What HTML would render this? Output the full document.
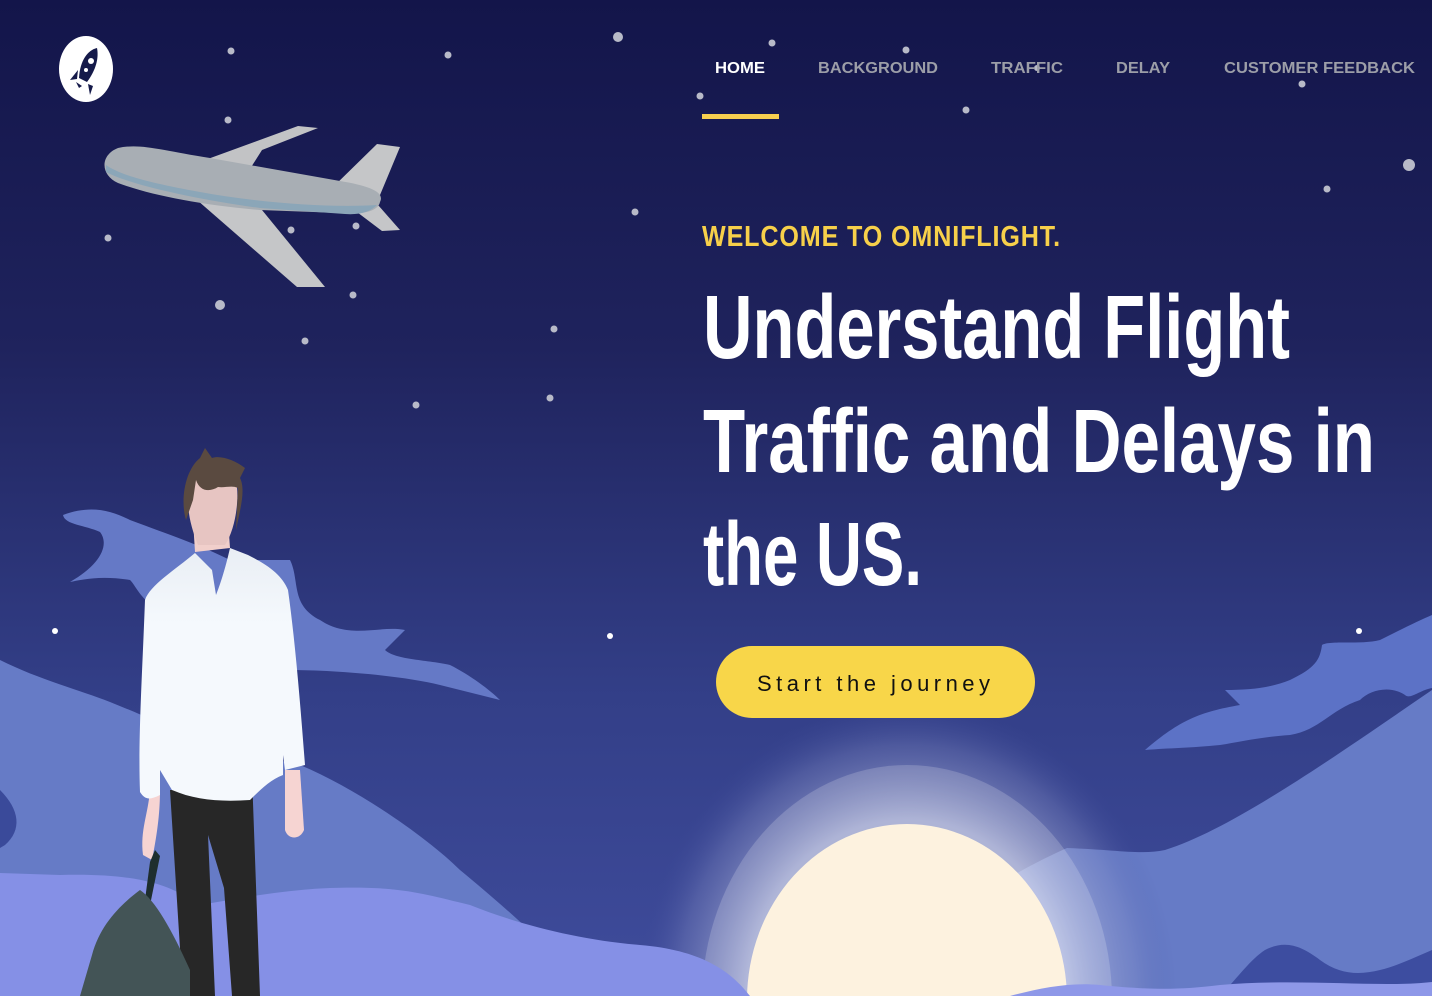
<!DOCTYPE html>
<html><head><meta charset="utf-8"><style>
html,body{margin:0;padding:0;width:1432px;height:996px;overflow:hidden;background:#1c2056}
svg{display:block;position:absolute;left:0;top:0}
text{font-family:"Liberation Sans",sans-serif}
.b{font-weight:700}
</style></head><body>
<svg width="1432" height="996" viewBox="0 0 1432 996" xmlns="http://www.w3.org/2000/svg">
<defs>
<linearGradient id="sky" x1="0" y1="0" x2="0" y2="1">
<stop offset="0" stop-color="#13154a"/>
<stop offset="0.35" stop-color="#1f235d"/>
<stop offset="0.7" stop-color="#333f88"/>
<stop offset="1" stop-color="#3f4c9c"/>
</linearGradient>
<radialGradient id="halo" cx="0.5" cy="0.5" r="0.5">
<stop offset="0.6" stop-color="#c8cde8" stop-opacity="0.7"/>
<stop offset="0.85" stop-color="#8a93c8" stop-opacity="0.3"/>
<stop offset="1" stop-color="#3f4c9c" stop-opacity="0"/>
</radialGradient>
<linearGradient id="shirt" x1="0" y1="0" x2="0" y2="1">
<stop offset="0" stop-color="#e9eef4"/><stop offset="0.3" stop-color="#f5f9fd"/>
</linearGradient>
</defs>
<rect width="1432" height="996" fill="url(#sky)"/>

<g fill="#b8bac8">
<circle cx="231" cy="51" r="3.5"/><circle cx="448" cy="55" r="3.5"/><circle cx="618" cy="37" r="5"/>
<circle cx="772" cy="43" r="3.5"/><circle cx="906" cy="50" r="3.5"/><circle cx="700" cy="96" r="3.5"/>
<circle cx="966" cy="110" r="3.5"/><circle cx="1302" cy="84" r="3.5"/><circle cx="1409" cy="165" r="6"/>
<circle cx="1327" cy="189" r="3.5"/><circle cx="635" cy="212" r="3.5"/><circle cx="228" cy="120" r="3.5"/>
<circle cx="108" cy="238" r="3.5"/><circle cx="220" cy="305" r="5"/><circle cx="305" cy="341" r="3.5"/>
<circle cx="353" cy="295" r="3.5"/><circle cx="291" cy="230" r="3.5"/><circle cx="356" cy="226" r="3.5"/>
<circle cx="554" cy="329" r="3.5"/><circle cx="550" cy="398" r="3.5"/><circle cx="416" cy="405" r="3.5"/>
<circle cx="1037" cy="68" r="3"/>
</g>
<g fill="#fff"><circle cx="55" cy="631" r="3"/><circle cx="610" cy="636" r="3"/><circle cx="1359" cy="631" r="3"/></g>

<path fill="#6579c6" d="M63 515 C90 505 110 510 130 520 C170 535 200 545 230 560 L290 560 C300 580 290 605 320 620 C350 640 380 625 405 630 L385 650 C395 660 430 660 450 665 C470 675 490 690 500 700 C480 695 460 690 440 685 C400 675 330 670 290 670 L215 640 C140 610 140 590 130 580 C100 575 80 580 70 582 C100 565 110 545 100 532 C85 525 65 525 63 515Z"/>
<path fill="#5c72c6" d="M1145 750 C1180 720 1200 712 1240 705 L1225 690 C1250 690 1270 688 1290 680 C1315 668 1320 660 1322 645 C1330 640 1360 645 1380 640 C1400 630 1420 620 1432 615 L1432 688 C1420 690 1410 700 1405 695 C1390 685 1370 690 1360 700 C1330 710 1320 730 1290 735 C1260 737 1240 742 1220 745 C1190 748 1170 748 1145 750Z"/>

<path fill="#667bc6" d="M0 660 C40 680 80 690 110 702 C150 718 200 740 240 765 C270 760 290 760 300 765 C360 790 430 840 460 870 C490 895 520 920 560 960 L580 996 L0 996Z"/>
<path fill="#3a4a9a" d="M0 790 C20 810 22 830 5 845 L0 848Z"/>
<path fill="#667bc6" d="M950 917 C1000 880 1040 860 1067 848 C1120 850 1140 855 1165 850 C1230 830 1330 760 1432 690 L1432 996 L930 996Z"/>
<path fill="#3d4da0" d="M1220 996 C1240 975 1250 960 1265 950 C1285 940 1300 945 1320 960 C1340 975 1360 975 1380 970 C1400 965 1420 955 1432 950 L1432 996Z"/>

<ellipse cx="907" cy="1000" rx="270" ry="300" fill="url(#halo)"/>
<ellipse cx="907" cy="1000" rx="205" ry="235" fill="#ffffff" fill-opacity="0.18"/>
<ellipse cx="907" cy="1000" rx="160" ry="176" fill="#fdf2df"/>

<path fill="#8590e6" d="M0 873 L60 875 C140 873 170 885 200 905 C230 900 280 890 330 888 C400 886 420 893 470 905 C520 925 580 940 640 945 C700 950 730 970 750 996 L0 996Z"/>
<path fill="#8e98e8" d="M1010 996 C1040 988 1070 982 1100 985 C1150 990 1180 990 1220 985 C1300 978 1380 988 1432 982 L1432 996Z"/>

<g>
<polygon points="205,160 298,126 318,128 262,150 248,172" fill="#c2c3c5"/>
<polygon points="197,200 262,210 325,287 297,287" fill="#c5c6c8"/>
<polygon points="330,190 377,144 400,147 380,195" fill="#c5c6c8"/>
<polygon points="345,203 378,205 400,230 382,231" fill="#c5c6c8"/>
<path d="M118 148 C140 143 160 150 210 158 L340 181 C370 186 385 192 380 202 C378 212 360 215 340 213 L260 210 C200 205 150 195 118 183 C100 175 100 155 118 148Z" fill="#a8aeb4"/>
<path d="M106 172 C130 185 200 200 260 208 L345 214 C360 215 370 212 377 205 C330 208 260 203 200 192 C150 183 120 175 106 165Z" fill="#8ba6b8"/>
</g>

<ellipse cx="86" cy="69" rx="27" ry="33" fill="#fff"/>
<g fill="#151a4a">
<path d="M97 48 C88 50 80 60 79 78 L87 82 C96 70 99 58 97 48Z"/>
<path d="M78 70 L70 80 L77 79Z"/>
<path d="M88 84 L90 95 L93 86Z"/>
<path d="M76 82 L82 86 L79 88Z"/>
</g>
<circle cx="91" cy="61" r="3" fill="#fff"/><circle cx="86" cy="70" r="2" fill="#fff"/>

<g>
<path d="M150 790 C148 815 140 830 143 855 L152 860 C158 830 160 810 160 790Z" fill="#f6d4d2"/>
<path d="M285 770 L285 830 C288 840 300 840 304 830 L300 770Z" fill="#f6d4d2"/>
<path d="M170 790 L183 996 L215 996 L208 835 L224 888 L232 996 L260 996 L252 775 L230 790Z" fill="#272727"/>
<path d="M193 520 L195 552 L230 548 L228 520Z" fill="#f1cfcb"/>
<path d="M195 553 C175 570 150 585 145 600 C142 680 138 740 140 792 C145 800 150 800 160 795 L160 770 L172 790 C195 800 220 802 250 800 C260 790 270 780 283 775 L283 755 L285 770 L305 765 C300 700 295 640 288 590 C282 575 268 565 248 555 L230 548 C225 570 220 585 216 595 L212 570Z" fill="url(#shirt)"/>
<path d="M190 480 C185 505 190 525 198 545 L225 545 C235 530 240 500 236 480Z" fill="#e7c5c2"/>
<path d="M186 520 C180 500 185 470 200 458 L205 448 L212 458 C220 455 235 460 245 468 L240 478 C246 490 240 510 236 530 L238 488 C232 485 225 488 218 487 C210 492 200 492 196 480 L193 500Z" fill="#5a4a40"/>
<path d="M150 862 L155 850 L160 856 L148 915 L143 915Z" fill="#1e2e2e"/>
<path d="M92 955 C100 925 120 905 140 890 C155 900 172 930 190 970 L190 996 L80 996Z" fill="#435456"/>
</g>

<g class="b" font-size="16" fill="#9c9ea8" style="font-weight:700">
<text x="715" y="73" textLength="50" lengthAdjust="spacingAndGlyphs" fill="#fff">HOME</text>
<text x="818" y="73" textLength="120" lengthAdjust="spacingAndGlyphs">BACKGROUND</text>
<text x="991" y="73" textLength="72" lengthAdjust="spacingAndGlyphs">TRAFFIC</text>
<text x="1116" y="73" textLength="54" lengthAdjust="spacingAndGlyphs">DELAY</text>
<text x="1224" y="73" textLength="191" lengthAdjust="spacingAndGlyphs">CUSTOMER FEEDBACK</text>
</g>
<rect x="702" y="114" width="77" height="5" fill="#f7cf4f"/>

<text x="702" y="246" font-size="29" fill="#f7d04a" textLength="359" lengthAdjust="spacingAndGlyphs" style="font-weight:700;letter-spacing:1px">WELCOME TO OMNIFLIGHT.</text>
<g font-size="90" fill="#fff" style="font-weight:700">
<text x="703" y="358" textLength="587" lengthAdjust="spacingAndGlyphs">Understand Flight</text>
<text x="703" y="472" textLength="672" lengthAdjust="spacingAndGlyphs">Traffic and Delays in</text>
<text x="703" y="585" textLength="219" lengthAdjust="spacingAndGlyphs">the US.</text>
</g>
<rect x="716" y="646" width="319" height="72" rx="36" fill="#f8d649"/>
<text x="757" y="691" font-size="22" fill="#111" textLength="233" lengthAdjust="spacing">Start the journey</text>
</svg>
</body></html>
